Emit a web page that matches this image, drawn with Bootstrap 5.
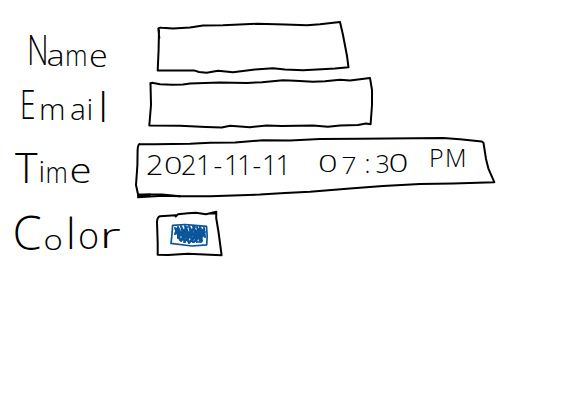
<!DOCTYPE html>
<html lang="en">
<head>
<meta charset="utf-8">
<meta name="viewport" content="width=device-width, initial-scale=1">
<title>Form sketch</title>
<link href="https://cdn.jsdelivr.net/npm/bootstrap@5.3.0/dist/css/bootstrap.min.css" rel="stylesheet">
<style>
  body { background: #fff; color: #000; }
  .ink { display: block; overflow: visible; fill: none; stroke: #000; stroke-width: 2; stroke-linecap: round; stroke-linejoin: round; }
  .ink text { fill: #000; stroke: none; font-family: "Open Sans", "Noto Sans", sans-serif; font-weight: 300; }
  .swatch-ink { stroke: #0b559b; }
</style>
</head>
<body>
<form class="d-flex flex-column pt-3">
  <div class="d-flex">
    <label class="flex-shrink-0">
      <svg class="ink" width="130" height="59" viewBox="0 16 130 59">
        <text transform="translate(27 65) scale(.7 1)" font-size="43">N</text>
        <text transform="translate(46.5 66) scale(1.18 1)" font-size="29">a</text>
        <text transform="translate(65 66) scale(.88 1)" font-size="29">m</text>
        <text transform="translate(89 67) scale(1.1 1)" font-size="31">e</text>
      </svg>
    </label>
    <svg class="ink" width="448" height="59" viewBox="130 16 448 59">
      <path d="M159.3 38L158.3 28.5Q159 27.5 162 27.8L173 28.5L190 27.6L203 25.5L223 25.3L257 23.8L285 24.6L307 25.3L320 24.2L340 22L343 35L347 56L348.5 67.3L335 68.6L321.7 69.3L303 70.3L285 69.5L273 68.3L255 69.6L233 72.3L218 70.8L206.7 72.7L199 72L194 70.4L180 70.4L157.7 70.5L158.6 50L159 30"/>
    </svg>
  </div>
  <div class="d-flex">
    <label class="flex-shrink-0">
      <svg class="ink" width="130" height="55" viewBox="0 75 130 55">
        <text transform="translate(20 118.5) scale(.7 1)" font-size="40">E</text>
        <text x="39 70 86.5 98.5" y="120" font-size="30">mai<tspan font-size="41" y="122">l</tspan></text>
      </svg>
    </label>
    <svg class="ink" width="448" height="55" viewBox="130 75 448 55">
      <path d="M150.3 84L152 82.7L160 84.3L172 84.8L183 84.5L190 83.4L220 82.5L246.7 83L262 82.2L283 80.3L295 80.8L313 81.8L325 81.2L340 79.7L350 80.4L370 78L372 90L372 105L370.6 124.3L366 123.6L358 125L340 125.6L328 126.8L313 125.4L281.7 126L266.7 125.4L250 127.2L230 125.8L221.7 127.4L206 127L180 125.8L149.3 125.5L151 105L150.5 83"/>
    </svg>
  </div>
  <div class="d-flex">
    <label class="flex-shrink-0">
      <svg class="ink" width="130" height="75" viewBox="0 130 130 75">
        <text x="15" y="183" font-size="43">T</text>
        <text x="38.5" y="182" font-size="29">i</text>
        <text transform="translate(45.5 183) scale(.87 1)" font-size="29">m</text>
        <text transform="translate(69.5 183) scale(1.15 1)" font-size="35">e</text>
      </svg>
    </label>
    <svg class="ink" width="448" height="75" viewBox="130 130 448 75">
      <path d="M139.5 144L155 144.2L190 143.7L210 142.7L235 142.5L263 140.3L290 140.4L320 139L360 138.8L443 138L460 139.3L481.7 141.5L483.5 142.8L486 159L488.3 168.3L494.3 182.2L453 183.4L420 184L383 186L350 188.6L310 191.7L285 193L260 194.5L210 196.3L180 196.2L162 194.5L138 194.3L136 185L137.4 165L137.6 150Q138 144.5 139.5 144"/>
      <path d="M138 197.2L163 195.8L180 196.2M138 195.6L150 194.6"/>
      <text transform="translate(146 174.5) scale(1.13 1)" font-size="27">2</text>
      <text transform="translate(164 174) scale(1.2 .87)" font-size="27">0</text>
      <text y="174.5" font-size="27" x="181 196 213.5 224 237 252.5 262 275.5">21-11-11</text>
      <text transform="translate(318 171.5) scale(1.38 .93)" font-size="25">0</text>
      <text transform="translate(341.5 173.5) scale(1.1 1)" font-size="24">7</text>
      <text y="173" x="364.5 375.5" font-size="25">:3</text>
      <text transform="translate(388.5 171.5) scale(1.4 1)" font-size="25">0</text>
      <text y="167" font-size="25" x="429 445">PM</text>
    </svg>
  </div>
  <div class="d-flex">
    <label class="flex-shrink-0">
      <svg class="ink" width="130" height="60" viewBox="0 205 130 60">
        <text x="12.5" y="249.5" font-size="47">C</text>
        <text transform="translate(43.5 250) scale(1.22 1)" font-size="27">o</text>
        <text x="66" y="249" font-size="43">l</text>
        <text x="78" y="248.5" font-size="36">o</text>
        <text transform="translate(99.5 248) scale(1.6 1)" font-size="34">r</text>
      </svg>
    </label>
    <svg class="ink" width="448" height="60" viewBox="130 205 448 60">
      <path d="M175.7 216.5L178 214.3L188 213.3L196 212.8L206 214.2L216.3 211.8L216.2 218L218.5 232L221.6 255.2L210 254.7L188 253.8L168 255L157.7 254.7L157.7 243L157 222Q157.2 217 160 216.2L175.5 215.3M210 213.6L215.5 213.3"/>
      <g class="swatch-ink" stroke-width="1.7">
        <path d="M172.6 225.4L185 224.5L195 225.4L206.5 226.4L207.2 236L206.7 244.8L192 246L171 243.4L172 234Z"/>
        <path stroke-width="2" d="M175 228L180 240L178 227L185 242L181 226L189 243L185 226L193 242L189 226L197 242L193 226L201 242L197 227L202 241L200 227L205 237L204 228M175 234L178 227L178 238L187 227L181 241L195 227L184 242L200 228L189 243L204 229L194 242L205 232L199 242"/>
      </g>
    </svg>
  </div>
</form>
<script src="https://cdn.jsdelivr.net/npm/bootstrap@5.3.0/dist/js/bootstrap.bundle.min.js"></script>
</body>
</html>
